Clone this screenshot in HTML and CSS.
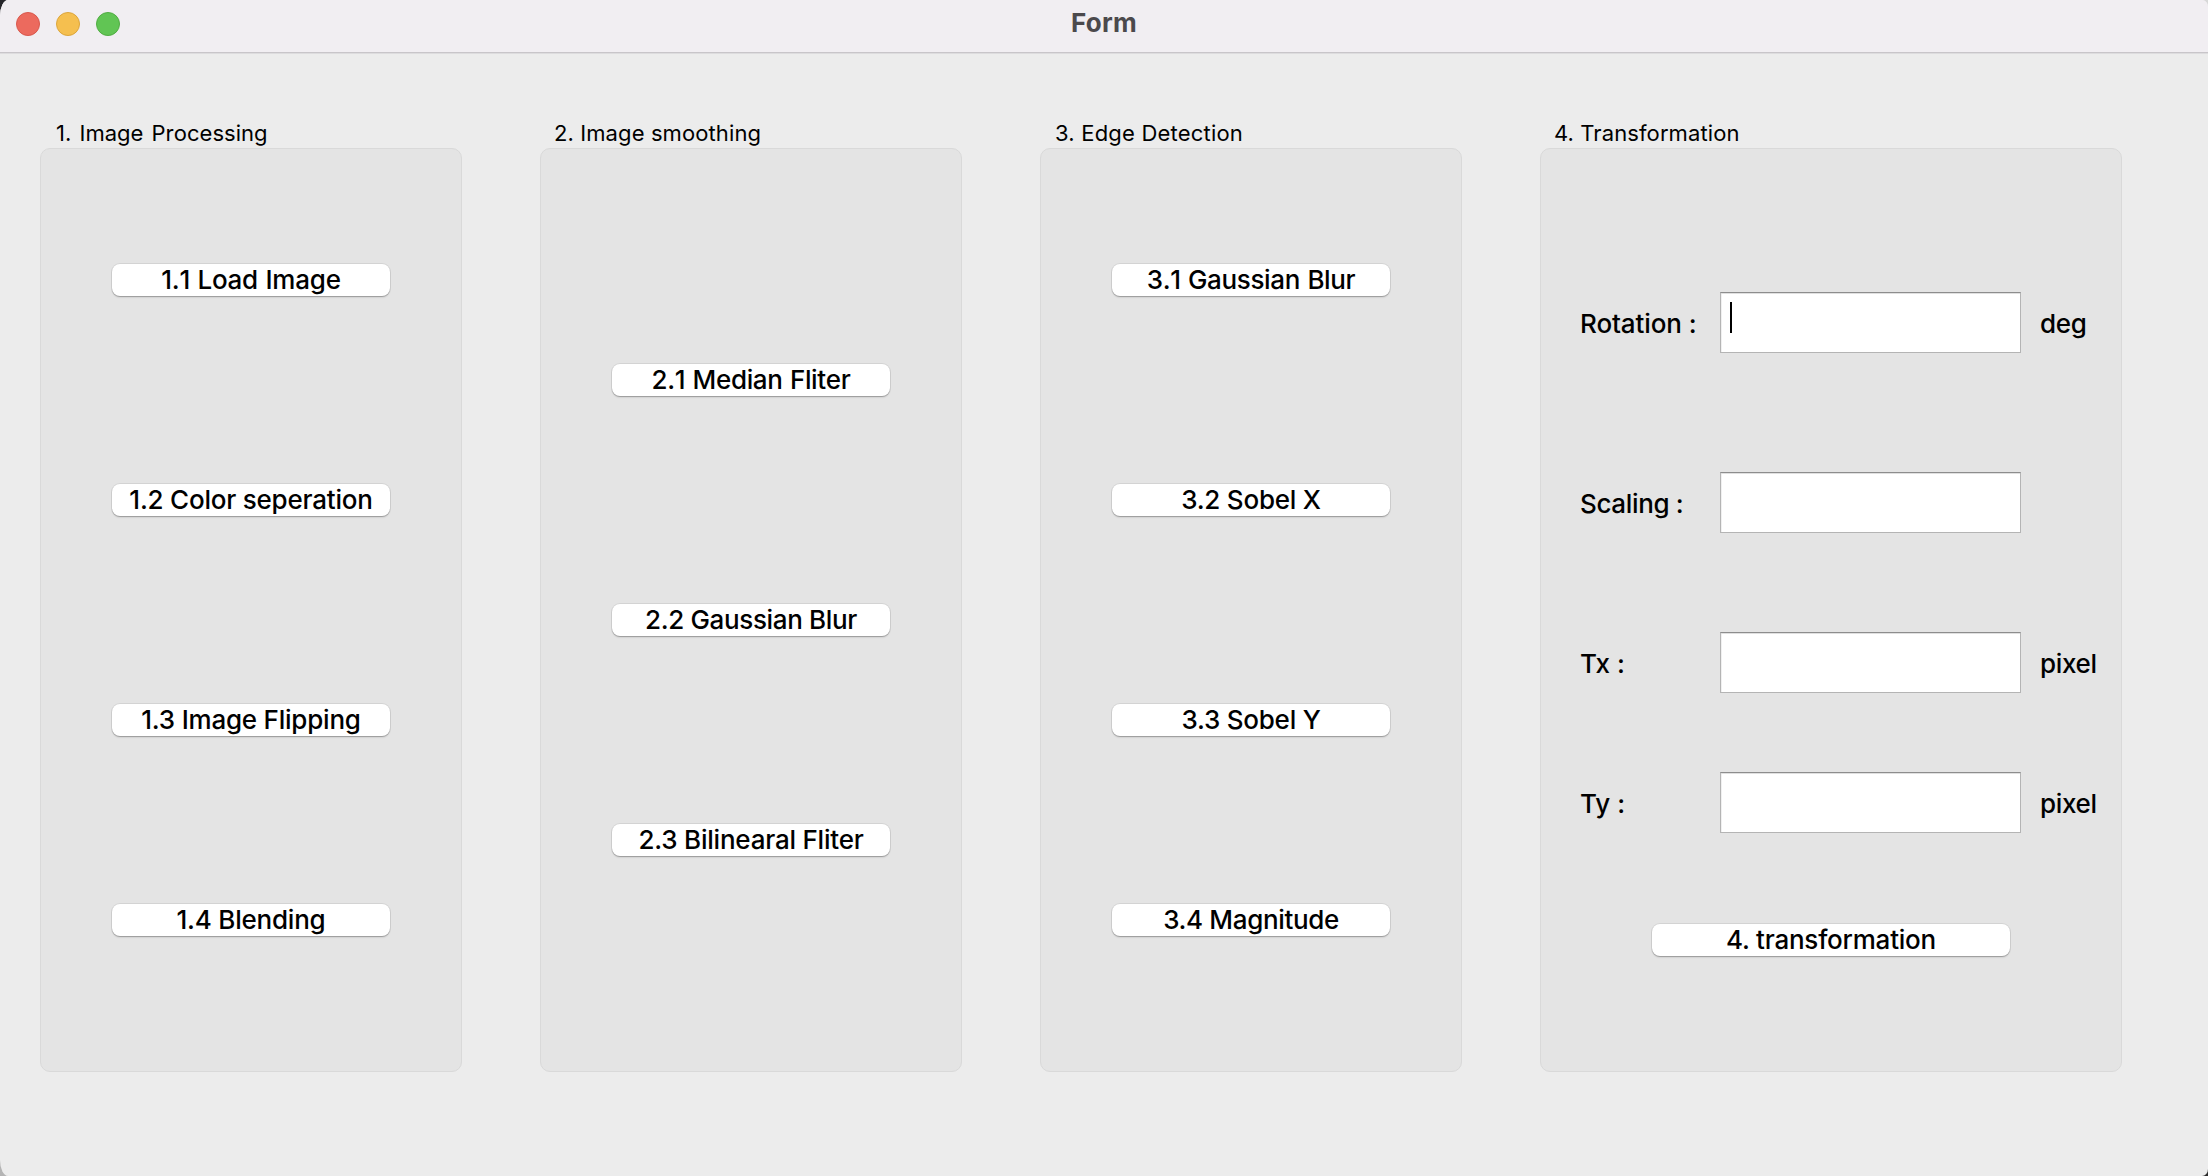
FILE: index.html
```html
<!DOCTYPE html>
<html lang="en">
<head>
  <meta charset="utf-8">
  <title>Form</title>
  <link rel="stylesheet" href="styles.css">
</head>
<body>
  <div class="window">
    <header class="titlebar">
      <div class="lights">
        <span class="light light-close"></span>
        <span class="light light-minimize"></span>
        <span class="light light-zoom"></span>
      </div>
      <h1 class="title">Form</h1>
    </header>
    <main class="content">
      <section class="group">
        <h2 class="group-title group-title-first">1. Image Processing</h2>
        <div class="panel stack-four">
          <button class="button unkerned">1.1 Load Image</button>
          <button class="button">1.2 Color seperation</button>
          <button class="button">1.3 Image Flipping</button>
          <button class="button">1.4 Blending</button>
        </div>
      </section>
      <section class="group">
        <h2 class="group-title group-title-snug">2. Image smoothing</h2>
        <div class="panel stack-three">
          <button class="button tight unkerned">2.1 Median Fliter</button>
          <button class="button tight">2.2 Gaussian Blur</button>
          <button class="button">2.3 Bilinearal Fliter</button>
        </div>
      </section>
      <section class="group">
        <h2 class="group-title">3. Edge Detection</h2>
        <div class="panel stack-four">
          <button class="button tight unkerned">3.1 Gaussian Blur</button>
          <button class="button">3.2 Sobel X</button>
          <button class="button">3.3 Sobel Y</button>
          <button class="button tight">3.4 Magnitude</button>
        </div>
      </section>
      <section class="group group-wide">
        <h2 class="group-title group-title-snug">4. Transformation</h2>
        <div class="panel transform">
          <div class="row row-rotation">
            <span class="label snug">Rotation :</span>
            <div class="field"><span class="caret"></span></div>
            <span class="label tight">deg</span>
          </div>
          <div class="row row-scaling">
            <span class="label tight">Scaling :</span>
            <div class="field"></div>
          </div>
          <div class="row row-tx">
            <span class="label">Tx :</span>
            <div class="field"></div>
            <span class="label tight">pixel</span>
          </div>
          <div class="row row-ty">
            <span class="label">Ty :</span>
            <div class="field"></div>
            <span class="label tight">pixel</span>
          </div>
          <button class="button button-wide">4. transformation</button>
        </div>
      </section>
    </main>
  </div>
</body>
</html>
```
FILE: styles.css
```css
* {
  box-sizing: border-box;
}

body {
  margin: 0;
  font-family: Inter, "Liberation Sans", sans-serif;
  color: #000;
  background:
    linear-gradient(#26262b, #26262b) left top / 20px 20px no-repeat,
    linear-gradient(#d8d8d8, #d8d8d8) right top / 20px 20px no-repeat,
    linear-gradient(#b4b4b4, #b4b4b4) left bottom / 20px 20px no-repeat,
    linear-gradient(#2a2a2a, #2a2a2a) right bottom / 20px 20px no-repeat,
    #ececec;
}

.window {
  width: 2208px;
  height: 1176px;
  overflow: hidden;
  background: #ececec;
  border-radius: 8px 6px 6px 8px / 16px 7px 7px 16px;
}

.titlebar {
  display: grid;
  grid-template-columns: 1fr auto 1fr;
  height: 54px;
  background: #f1eef2;
  border-bottom: 1px solid #dddcde;
  box-shadow: inset 0 -1px #c8c5c9;
}

.lights {
  display: flex;
  gap: 16px;
  padding: 12px 0 0 16px;
}

.light {
  width: 24px;
  height: 24px;
  border: 1px solid;
  border-radius: 50%;
}

.light-close {
  background: #ec6a5e;
  border-color: #d8584d;
}

.light-minimize {
  background: #f5bf4f;
  border-color: #dba53c;
}

.light-zoom {
  background: #61c554;
  border-color: #51ac43;
}

.title {
  margin: 0;
  font-size: 26px;
  font-weight: 700;
  line-height: 46px;
  letter-spacing: 0.3px;
  color: #4b494c;
}

.content {
  display: flex;
  gap: 78px;
  padding: 66px 0 0 40px;
}

.group {
  width: 422px;
}

.group-wide {
  width: 582px;
}

.group-title {
  margin: 0;
  padding-left: 15px;
  height: 28px;
  font-size: 22px;
  font-weight: 400;
  line-height: 27px;
  letter-spacing: 0.2px;
  white-space: nowrap;
}

.group-title-first {
  padding-left: 16px;
  letter-spacing: 0;
  word-spacing: 2px;
  font-kerning: none;
}

.group-title-snug {
  padding-left: 14px;
  letter-spacing: 0.1px;
}

.panel {
  display: flex;
  flex-direction: column;
  align-items: center;
  height: 924px;
  background: #e4e4e4;
  border: 1px solid #d9d9d9;
  border-radius: 10px;
}

.stack-four {
  padding-top: 115px;
  gap: 188px;
}

.stack-four .button:last-child {
  margin-top: -20px;
}

.stack-three {
  padding-top: 215px;
  gap: 188px;
}

.stack-three .button:first-child {
  margin-bottom: 20px;
}

.button {
  flex: none;
  width: 278px;
  height: 32px;
  padding: 0 0 1px;
  border: 0;
  border-radius: 8px;
  background: #fff;
  box-shadow: 0 0 0 1px rgba(0, 0, 0, 0.07), 0 1px 1px rgba(0, 0, 0, 0.22), 0 2px 2px rgba(0, 0, 0, 0.06);
  font: 500 26px/31px Inter, "Liberation Sans", sans-serif;
  letter-spacing: -0.22px;
  color: #000;
  white-space: nowrap;
}

.tight {
  letter-spacing: -0.35px;
}

.snug {
  letter-spacing: -0.1px;
}

.unkerned {
  font-kerning: none;
  word-spacing: 0.8px;
}

.button-wide {
  width: 358px;
}

.transform {
  padding-top: 143px;
}

.row {
  display: grid;
  grid-template-columns: 140px 301px 1fr;
  width: 100%;
  height: 61px;
  padding-left: 39px;
}

.row-rotation {
  margin-bottom: 119px;
}

.row-scaling {
  margin-bottom: 99px;
}

.row-tx {
  margin-bottom: 79px;
}

.row-ty {
  margin-bottom: 91px;
}

.label {
  font-size: 26px;
  font-weight: 500;
  line-height: 63px;
  white-space: nowrap;
}

.field {
  height: 61px;
  padding: 9px 0 0 9px;
  background: #fff;
  border: 1px solid #b4b4b4;
  border-top-color: #8d8d8d;
  box-shadow: inset 0 1px #e0e0e0, inset 1px 0 #f0f0f0;
}

.field + .label {
  padding-left: 19px;
}

.caret {
  display: block;
  width: 2px;
  height: 31px;
  background: #000;
}
```
